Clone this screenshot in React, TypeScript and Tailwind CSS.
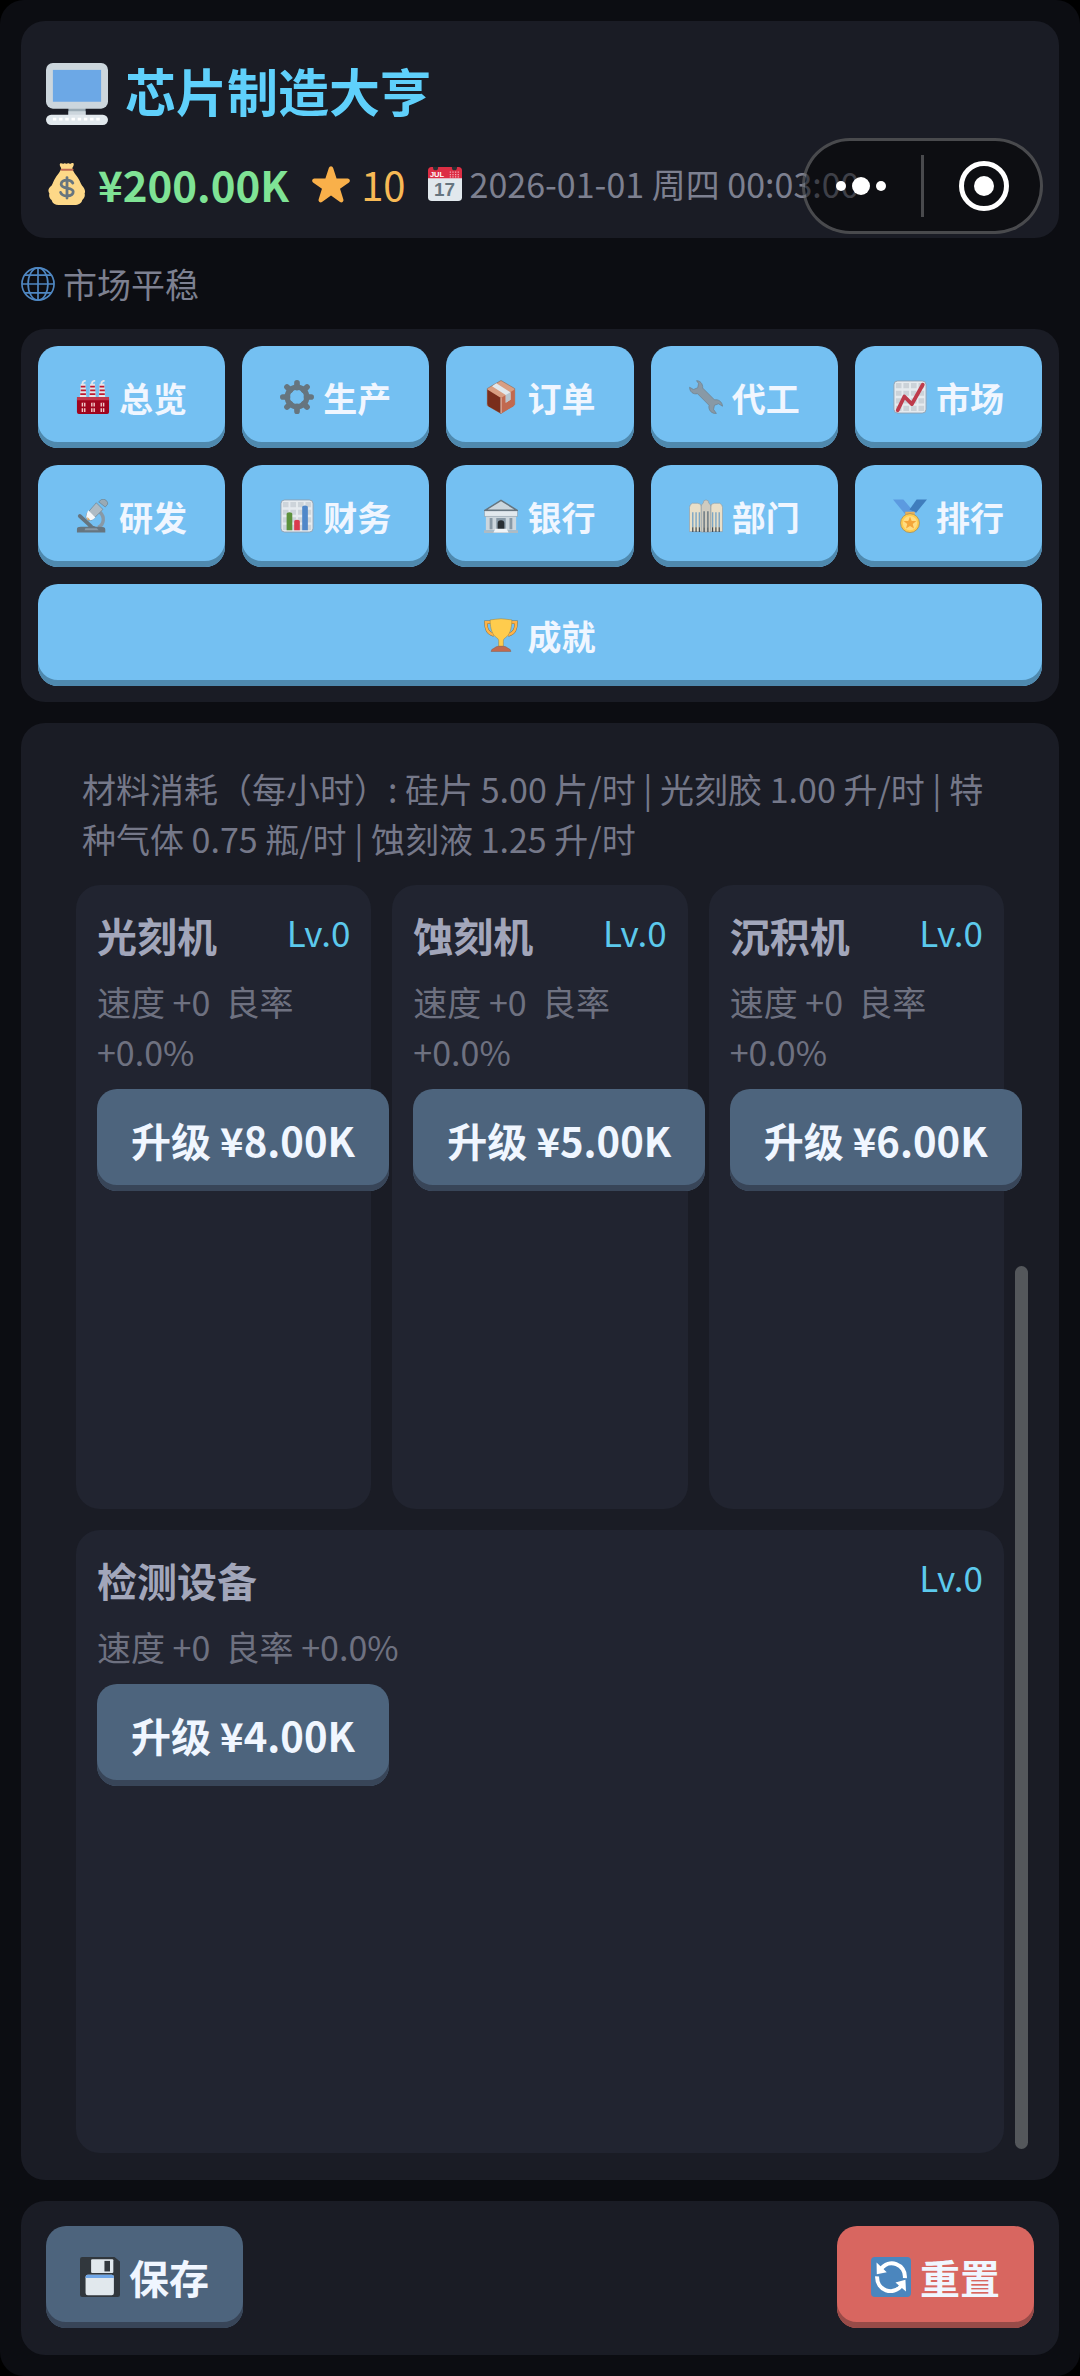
import React from "react";
import clsx from "clsx";

type IconProps = { className?: string };

function Svg({ className, children }: React.PropsWithChildren<IconProps>) {
  return (
    <svg viewBox="0 0 36 36" fill="none" aria-hidden="true" className={clsx("shrink-0", className)}>
      {children}
    </svg>
  );
}

const ComputerIcon = ({ className }: IconProps) => (
  <Svg className={className}>
    <path fill="#9AAAB4" d="M13 25h10v7H13z" />
    <path fill="#CCD6DD" d="M13 28h10v3H13z" />
    <rect width="36" height="26.5" rx="4" fill="#CCD6DD" />
    <rect x="4" y="4" width="28" height="18.5" fill="#6CA8E6" />
    <rect y="30" width="36" height="6" rx="3" fill="#E1E8ED" />
    <path stroke="#fff" strokeWidth="1.6" strokeDasharray="2 1.6" d="M4 32.6h28" />
  </Svg>
);

const MoneyBagIcon = ({ className }: IconProps) => (
  <Svg className={className}>
    <path
      fill="#FDD888"
      d="M12 .6c1.200-1.200 2.200.8 3.400-.2 1-.8 1.800.8 2.900 0 1.200-.9 2 .9 3.200.1 1-.6 2.300-.6 2.300.6 0 1.500-1 2.200-1.200 3.500 0 1.700 2.200 4.600 4.600 7.900 1.900 2.700 2.200 5 3.800 6.900 1.700 2 3.200 4.100 2.100 6.700.7 2.400-.5 4.500-2 5.600-.6 2.800-3.300 4.300-6.600 4.300H11c-3.300 0-5.600-1.500-6.200-4.300-1.500-1.100-2.600-3.200-1.900-5.600-1.800-2.600-.5-4.900 1.800-6.500 1.500-2.200 1.700-4.500 3.600-7.100 2.300-3.300 4.700-6.200 4.700-7.900C12.900 3.400 11.200 2 12 .6Z"
    />
    <path stroke="#BF6952" strokeWidth="1.600" strokeLinecap="round" d="M13.400 5.800h9.400" />
    <path
      stroke="#67757F"
      strokeWidth="2.400"
      strokeLinecap="round"
      d="M18 12.500v17.500M23 17.200c-.8-1.700-2.700-2.500-5-2.500-2.900 0-5 1.300-5 3.500 0 4.800 10.300 1.900 10.300 6.500 0 2.200-2.200 3.500-5.300 3.500-2.700 0-4.800-1-5.500-3"
    />
  </Svg>
);

const StarIcon = ({ className }: IconProps) => (
  <Svg className={className}>
    <path
      fill="#F9B04A"
      d="M27.287 34.627c-.404 0-.806-.124-1.152-.371L18 28.422l-8.135 5.834a1.970 1.970 0 0 1-2.312-.008 1.971 1.971 0 0 1-.721-2.194l3.034-9.792-8.062-5.681a1.980 1.980 0 0 1-.708-2.203 1.978 1.978 0 0 1 1.866-1.363L12.947 13l3.179-9.549a1.976 1.976 0 0 1 3.749 0L23 13l10.036.015a1.975 1.975 0 0 1 1.159 3.566l-8.062 5.681 3.034 9.792a1.970 1.970 0 0 1-.72 2.194 1.957 1.957 0 0 1-1.160.379z"
    />
  </Svg>
);

const CalendarIcon = ({ className }: IconProps) => (
  <Svg className={className}>
    <rect y="2" width="36" height="34" rx="4" fill="#E1E8ED" />
    <path fill="#DD2E44" d="M3.500 0h29C34.500 0 36 1.500 36 3.500V12H0V3.500C0 1.500 1.500 0 3.500 0Z" />
    <circle cx="8" cy=".8" r="2.700" fill="#292F33" />
    <circle cx="28" cy=".8" r="2.700" fill="#292F33" />
    <text x="2" y="10.500" fontSize="8" fontWeight="700" fill="#fff" fontFamily="Liberation Sans, sans-serif">
      JUL
    </text>
    <path stroke="#F4ABBA" strokeWidth="1.300" strokeDasharray="1.300 1.500" d="M23 5.500h11M23 8h11M23 10.500h11" />
    <text x="17.500" y="31" textAnchor="middle" fontSize="20" fontWeight="700" fill="#66757F" fontFamily="Liberation Sans, sans-serif">
      17
    </text>
  </Svg>
);

const GlobeIcon = ({ className }: IconProps) => (
  <Svg className={className}>
    <g stroke="#4F87C2" strokeWidth="1.800">
      <circle cx="18" cy="18" r="17" />
      <ellipse cx="18" cy="18" rx="10.500" ry="17" />
      <path d="M18 1v34M1 18h34M4 8.500h28M4 27.500h28" />
    </g>
  </Svg>
);

const FactoryIcon = ({ className }: IconProps) => (
  <Svg className={className}>
    {[5, 15, 25].map((x) => (
      <g key={x}>
        <path fill="#E6E7E8" d={`M${x} 4h5l1 15h-7z`} />
        <path stroke="#BE1931" strokeWidth="1.800" d={`M${x} 7h5M${x} 11h5.500M${x - 0.500} 15h6`} />
        <path stroke="#E1E8ED" strokeWidth="2" strokeLinecap="round" d={`M${x + 2} 3.500q0-2 2.500-2.500`} />
      </g>
    ))}
    <rect x="1" y="18" width="34" height="18" rx="2" fill="#A0041E" />
    <path fill="#C1374A" d="M1 18h34v3.500H1z" />
    <path fill="#F3CBCB" d="M6 24h4v4H6zM16 24h4v4h-4zM26 24h4v4h-4zM6 30h4v4H6zM16 30h4v4h-4zM26 30h4v4h-4z" />
    <path stroke="#A0041E" d="M8 24v10M18 24v10M28 24v10" />
  </Svg>
);

const GearIcon = ({ className }: IconProps) => (
  <Svg className={className}>
    <g stroke="#66757F" strokeWidth="6" strokeLinecap="round">
      <path d="M18 3v5M18 28v5M3 18h5M28 18h5M7.400 7.400l3.500 3.500M25.100 25.100l3.500 3.500M28.600 7.400l-3.500 3.500M10.900 25.100l-3.500 3.500" />
    </g>
    <circle cx="18" cy="18" r="10.400" stroke="#66757F" strokeWidth="5.600" />
  </Svg>
);

const PackageIcon = ({ className }: IconProps) => (
  <Svg className={className}>
    <path fill="#D99E82" stroke="#8A6450" strokeWidth=".6" d="M18 .5 32.500 9v17L18 35.500 3.500 27V9Z" />
    <path fill="#7A2E1C" d="M3.500 10 18 19v16.500L5 28q-1.500-1-1.500-3Z" />
    <path fill="#C1694F" d="m18 19 14.500-9v15q0 2-1.500 3L18 35.500Z" />
    <path stroke="#F0D3C5" d="M18 19v16" />
    <path fill="#E1E8ED" d="m13 3.500 15 9.500v8l-5 3v-8L8.500 6.500Z" />
    <path fill="#B8C6CF" d="m23 16 5-3v8l-5 3Z" />
  </Svg>
);

const WrenchIcon = ({ className }: IconProps) => (
  <Svg className={className}>
    <path
      fill="#8899A6"
      stroke="#687681"
      strokeWidth=".6"
      d="M8 .7c3.500-.2 6.900 3 6.500 7.800L27 21c4-.9 8.300 2 8.500 6.800l-4.200-2.600-4.300 1.600-1 4.300 3 4.300c-4.800.7-9-3.700-7.800-8.600L9 14.500C4.500 15.700.5 12.200.6 7.700L4.800 10l4.400-1.800.9-4.400Z"
    />
  </Svg>
);

const ChartUpIcon = ({ className }: IconProps) => (
  <Svg className={className}>
    <rect x="1" y="1" width="34" height="34" rx="4" fill="#E6EBEF" stroke="#8FA3B5" />
    <path
      stroke="#CBD2D8"
      strokeWidth="5.500"
      strokeDasharray="6 2"
      d="M3 6h30M3 14h30M3 22h30M3 30h30"
    />
    <path stroke="#BE3B4B" strokeWidth="4" strokeLinecap="round" strokeLinejoin="round" d="m5 32 7-14.500 8 8L31.500 5" />
  </Svg>
);

const MicroscopeIcon = ({ className }: IconProps) => (
  <Svg className={className}>
    <path stroke="#66757F" strokeWidth="4" strokeLinecap="round" d="m4 18 12 11" />
    <path stroke="#8899A6" strokeWidth="3.600" d="M25.500 14c5 5 4.500 13-2 16" />
    <path fill="#66757F" d="M1 32q0-2.500 4-2.500h7q5-2.500 9 0h4q6 0 6 2.500v3.500H1Z" />
    <path fill="#8899A6" d="M10 31h12l2 2H9z" />
    <path fill="#AEBBC4" stroke="#66757F" strokeWidth=".6" d="m21.500 4 7 7-11 11q-4 1.500-5.800-.3t-.4-6Z" />
    <path fill="#F5F8FA" d="m13 12 7.500 7.500-2.500 2.300q-4 1.500-6.300-.5-1.500-2-.2-6Z" />
    <path fill="#D5A96C" d="m12 19 3 3-3 .5z" />
    <path fill="#99AAB5" stroke="#66757F" strokeWidth=".6" d="m24 3 3-2.500q3-1 5 1t1.500 4L31 8.500Z" />
  </Svg>
);

const BarChartIcon = ({ className }: IconProps) => (
  <Svg className={className}>
    <rect x="1" y="1" width="34" height="34" rx="4" fill="#E6EBEF" stroke="#8FA3B5" />
    <path
      stroke="#CDD4DA"
      strokeWidth="5.500"
      strokeDasharray="6 2"
      d="M3 6h30M3 14h30M3 22h30M3 30h30"
    />
    <path fill="#5C913B" d="M7 33V16q0-2 3-2t3 2v17Z" />
    <path fill="#D93A4E" d="M15 33v-9q0-2 3-2t3 2v9Z" />
    <path fill="#4F87C9" d="M23.500 33V9q0-2 3-2t3 2v24Z" />
  </Svg>
);

const BankIcon = ({ className }: IconProps) => (
  <Svg className={className}>
    <path fill="#CCD6DD" d="M2 15h32v18H2z" />
    <path fill="#8798A5" d="M6 20h3v12H6zM13 20h10v12H13zM27 20h3v12h-3z" />
    <path fill="#E1E8ED" stroke="#8899A6" strokeWidth=".6" d="M.5 12.500h35v6H.5z" />
    <path fill="#CCD6DD" stroke="#66757F" strokeWidth="1.600" d="M1 12 18 1.500 35 12Z" />
    <path fill="#292F33" d="M14.500 32v-6q0-3.500 3.500-3.500t3.500 3.500v6Z" />
    <path fill="#AEBBC4" d="M0 33h36v3H0z" />
    <path fill="#F0F4F7" d="M12 31.500h12l2 4H10z" />
  </Svg>
);

const DepartmentIcon = ({ className }: IconProps) => (
  <Svg className={className}>
    <path fill="#E9DFC8" stroke="#8D979E" strokeWidth=".6" d="M.5 9q0-3 3-4.500H9q4 0 4 4v26H.5ZM35.500 9q0-3-3-4.500H27q-4 0-4 4v26h12.500Z" />
    <path fill="#CFCBC0" stroke="#8D979E" strokeWidth=".6" d="M13 7.500q0-2 2-3 0-3.500 3-3.500t3 3.500q2 1 2 3V35H13Z" />
    <path stroke="#7DA6C4" strokeWidth="1.500" d="M4 14v16M7.500 14v16M11 14v16M25 14v16M28.500 14v16M32 14v16" />
    <path stroke="#66757F" strokeWidth="1.500" d="M16 13v17M20 13v17" />
    <path stroke="#3E4A54" strokeWidth="1.300" d="M4 30v5M7.500 30v5M11 30v5M16 30v5M20 30v5M25 30v5M28.500 30v5M32 30v5" />
  </Svg>
);

const MedalIcon = ({ className }: IconProps) => (
  <Svg className={className}>
    <path fill="#5C9AE0" d="M0 .5h11l11 13-4 4h-4Z" />
    <path fill="#3F7DBD" d="M25 .5h11l-11.500 14-7-3.500Z" />
    <path fill="#E8B25C" d="M13 13.500h10v5H13z" />
    <circle cx="18" cy="25.500" r="10" fill="#FFCC4D" stroke="#A88A52" strokeWidth=".8" />
    <circle cx="18" cy="25.500" r="7.600" fill="#FFDC80" />
    <path
      fill="#F4A63A"
      d="m18 18.500 1.800 4.700 5 .2-3.900 3.100 1.300 4.800-4.200-2.700-4.200 2.700 1.300-4.800-3.900-3.100 5-.2Z"
    />
  </Svg>
);

const TrophyIcon = ({ className }: IconProps) => (
  <Svg className={className}>
    <path stroke="#7E7452" strokeWidth="3.600" d="M9.500 4.500H2c0 7 1.500 11.500 8.500 13.500M26.500 4.500H34c0 7-1.500 11.500-8.500 13.500" />
    <path stroke="#FFB347" strokeWidth="2.600" d="M9.500 4.500H2c0 7 1.500 11.500 8.500 13.500M26.500 4.500H34c0 7-1.500 11.500-8.500 13.500" />
    <path
      fill="#FFCC4D"
      stroke="#8A7B4A"
      strokeWidth=".5"
      d="M6.500 2Q18-.5 29.500 2c0 10-2.500 16-7 19-1.500 1-2 2-2 4v5h-5v-5c0-2-.5-3-2-4-4.500-3-7-9-7-19Z"
    />
    <path fill="#C1694F" stroke="#8A5B45" strokeWidth=".5" d="M7.500 35.500q0-2.500 3-3.500 2.500-2 4.500-2h6q2 0 4.500 2 3 1 3 3.500Z" />
  </Svg>
);

const FloppyIcon = ({ className }: IconProps) => (
  <Svg className={className}>
    <path fill="#31373D" d="M2 0h29l5 4v30q0 2-2 2H2q-2 0-2-2V2Q0 0 2 0Z" />
    <rect x="10" y="2" width="20" height="12.500" rx="1" fill="#E1E8ED" />
    <path fill="#31373D" d="M22 3.500h5v9.500h-5z" />
    <rect x="5" y="16" width="25.500" height="18.500" rx="2" fill="#E1E8ED" />
    <path fill="#70A7E8" d="M5 19v-1q0-2 2-2h21.500q2 0 2 2v1Z" />
  </Svg>
);

const RefreshIcon = ({ className }: IconProps) => (
  <Svg className={className}>
    <rect width="36" height="36" rx="3.500" fill="#4B86BE" />
    <path stroke="#fff" strokeWidth="3.600" d="M8.500 11.500C16 .5 31.500 6.500 30.500 19M5.500 17.500C5 30 20 35.500 27.500 25.500" />
    <path fill="#fff" d="m5 5 .2 10.500 9-1.800ZM31.500 31l-.5-10.500-9 2.500Z" />
  </Svg>
);

const TABS = [
  { label: "总览", Icon: FactoryIcon },
  { label: "生产", Icon: GearIcon },
  { label: "订单", Icon: PackageIcon },
  { label: "代工", Icon: WrenchIcon },
  { label: "市场", Icon: ChartUpIcon },
  { label: "研发", Icon: MicroscopeIcon },
  { label: "财务", Icon: BarChartIcon },
  { label: "银行", Icon: BankIcon },
  { label: "部门", Icon: DepartmentIcon },
  { label: "排行", Icon: MedalIcon },
  { label: "成就", Icon: TrophyIcon },
];

const MACHINES = [
  { name: "光刻机", level: 0, stats: "速度 +0\u00a0 良率 +0.0%", price: "¥8.00K" },
  { name: "蚀刻机", level: 0, stats: "速度 +0\u00a0 良率 +0.0%", price: "¥5.00K" },
  { name: "沉积机", level: 0, stats: "速度 +0\u00a0 良率 +0.0%", price: "¥6.00K" },
  { name: "检测设备", level: 0, stats: "速度 +0\u00a0 良率 +0.0%", price: "¥4.00K" },
];

const VARIANTS = {
  tab: "text-[34px] bg-[#74c0f2] shadow-[inset_0_-6px_0_#4f89ae]",
  slate: "px-[34px] text-[40px] bg-[#4d647d] shadow-[inset_0_-6px_0_#384558]",
  danger: "px-[34px] text-[40px] bg-[#d86660] shadow-[inset_0_-6px_0_#984b48]",
};

function GameButton({
  variant,
  className,
  children,
}: React.PropsWithChildren<{ variant: keyof typeof VARIANTS; className?: string }>) {
  return (
    <button
      type="button"
      className={clsx(
        "flex h-[102px] items-center justify-center gap-[9px] whitespace-nowrap rounded-[20px] font-bold text-[#f0f6ff]",
        VARIANTS[variant],
        className
      )}
    >
      {children}
    </button>
  );
}

function MachineCard({ name, level, stats, price, wide }: (typeof MACHINES)[number] & { wide: boolean }) {
  return (
    <article className={clsx("rounded-3xl bg-[#212430] px-[21px] pt-[25px]", wide && "col-span-3")}>
      <div className="flex items-start justify-between">
        <h2 className="text-[40px] font-bold leading-[50px] text-[#a2a6ba]">{name}</h2>
        <span className="text-[35px] leading-[43px] text-[#5cc9ec]">{`Lv.${level}`}</span>
      </div>
      <p className="mt-[17px] text-[34px] leading-[50px] text-[#6e7180]">{stats}</p>
      <GameButton variant="slate" className="mt-3">
        {`升级 ${price}`}
      </GameButton>
    </article>
  );
}

export default function App() {
  return (
    <div className="bg-black font-['Noto_Sans_CJK_SC','Noto_Sans',sans-serif]">
      <div className="flex min-h-screen flex-col gap-[21px] rounded-3xl bg-[#0c0d12] p-[21px]">
        {/* Header */}
        <header className="relative flex flex-col gap-[34px] rounded-3xl bg-[#1a1c25] px-[25px] pb-[29px] pt-[42px]">
          <div className="flex items-start gap-[17px]">
            <ComputerIcon className="size-[62px]" />
            <h1 className="text-[51px] font-bold leading-[54px] text-[#5fd0fb]">芯片制造大亨</h1>
          </div>
          <div className="flex items-center whitespace-nowrap leading-[50px]">
            <MoneyBagIcon className="size-[42px]" />
            <span className="ml-[10px] text-[42px] font-bold text-[#7fe395]">¥200.00K</span>
            <StarIcon className="ml-[22px] size-10" />
            <span className="ml-[10px] text-[40px] text-[#f7b955]">10</span>
            <CalendarIcon className="ml-[22px] size-[34px]" />
            <time className="ml-2 text-[34px] text-[#7d8090]">2026-01-01 周四 00:03:00</time>
          </div>

          {/* Mini program capsule, floats over the header */}
          <div className="absolute bottom-1 right-4 flex h-24 w-[241px] items-center rounded-full border-3 border-white/25 bg-black/50">
            <button type="button" aria-label="更多" className="flex flex-1 items-center justify-center pr-1">
              <svg width="52" height="20" viewBox="0 0 52 20" fill="#fff">
                <circle cx="6" cy="10" r="5" />
                <circle cx="26" cy="10" r="9" />
                <circle cx="46" cy="10" r="5" />
              </svg>
            </button>
            <span className="h-[62px] w-[3px] bg-white/25" />
            <button type="button" aria-label="关闭" className="flex flex-1 items-center justify-center pl-1">
              <svg width="50" height="50" viewBox="0 0 50 50" fill="none">
                <circle cx="25" cy="25" r="22.500" stroke="#fff" strokeWidth="5" />
                <circle cx="25" cy="25" r="10" fill="#fff" />
              </svg>
            </button>
          </div>
        </header>

        {/* Market status */}
        <div className="flex items-center gap-2">
          <GlobeIcon className="size-[34px]" />
          <p className="text-[34px] leading-[49px] text-[#7d8090]">市场平稳</p>
        </div>

        {/* Tabs */}
        <nav className="grid grid-cols-5 gap-[17px] rounded-3xl bg-[#1a1c25] px-[17px] pb-4 pt-[17px]">
          {TABS.map(({ label, Icon }, i) => (
            <GameButton key={label} variant="tab" className={i === TABS.length - 1 ? "col-span-5" : undefined}>
              <Icon className="size-[34px]" />
              {label}
            </GameButton>
          ))}
        </nav>

        {/* Machines */}
        <main className="relative flex flex-1 flex-col gap-[21px] rounded-3xl bg-[#1a1c25] px-[55px] pb-[27px] pt-[41px]">
          <p className="px-[6px] text-[34px] leading-[50px] text-[#757889]">
            材料消耗（每小时）: 硅片 5.00 片/时 | 光刻胶 1.00 升/时 | 特种气体 0.75 瓶/时 | 蚀刻液 1.25 升/时
          </p>
          <div className="grid flex-1 auto-rows-fr grid-cols-3 gap-[21px]">
            {MACHINES.map((machine, i) => (
              <MachineCard key={machine.name} {...machine} wide={i === MACHINES.length - 1} />
            ))}
          </div>
          <div className="absolute bottom-[31px] right-[31px] top-[543px] w-[13px] rounded-full bg-[#54575b]" />
        </main>

        {/* Actions */}
        <footer className="flex justify-between rounded-3xl bg-[#1a1c25] px-[25px] pb-[27px] pt-[25px]">
          <GameButton variant="slate">
            <FloppyIcon className="size-10" />
            保存
          </GameButton>
          <GameButton variant="danger">
            <RefreshIcon className="size-10" />
            重置
          </GameButton>
        </footer>
      </div>
    </div>
  );
}
